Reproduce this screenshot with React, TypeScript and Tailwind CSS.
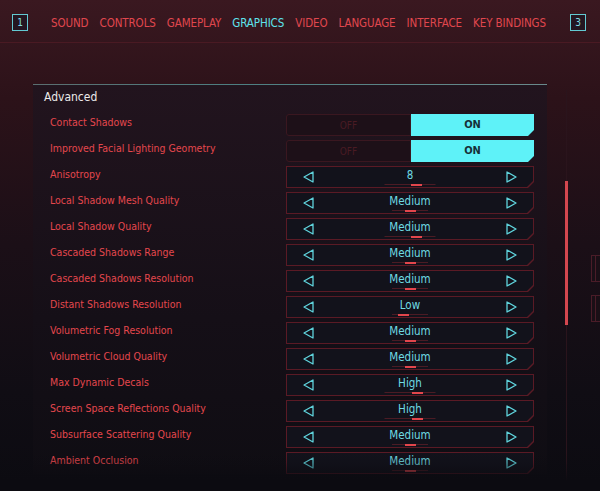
import React from 'react';

// Types
type Row =
  | { label: string; kind: 'toggle' }
  | { label: string; kind: 'select'; value: string; track: number; seg: number };

// Constants
const TABS = ['SOUND', 'CONTROLS', 'GAMEPLAY', 'GRAPHICS', 'VIDEO', 'LANGUAGE', 'INTERFACE', 'KEY BINDINGS'];
const ACTIVE_TAB = 'GRAPHICS';

const ROWS: Row[] = [
  { label: 'Contact Shadows', kind: 'toggle' },
  { label: 'Improved Facial Lighting Geometry', kind: 'toggle' },
  { label: 'Anisotropy', kind: 'select', value: '8', track: 51, seg: 6 },
  { label: 'Local Shadow Mesh Quality', kind: 'select', value: 'Medium', track: 36, seg: 0 },
  { label: 'Local Shadow Quality', kind: 'select', value: 'Medium', track: 51, seg: 6 },
  { label: 'Cascaded Shadows Range', kind: 'select', value: 'Medium', track: 36, seg: 0 },
  { label: 'Cascaded Shadows Resolution', kind: 'select', value: 'Medium', track: 36, seg: 0 },
  { label: 'Distant Shadows Resolution', kind: 'select', value: 'Low', track: 36, seg: -7 },
  { label: 'Volumetric Fog Resolution', kind: 'select', value: 'Medium', track: 36, seg: 0 },
  { label: 'Volumetric Cloud Quality', kind: 'select', value: 'Medium', track: 36, seg: 0 },
  { label: 'Max Dynamic Decals', kind: 'select', value: 'High', track: 51, seg: 7 },
  { label: 'Screen Space Reflections Quality', kind: 'select', value: 'High', track: 51, seg: 7 },
  { label: 'Subsurface Scattering Quality', kind: 'select', value: 'Medium', track: 36, seg: 0 },
  { label: 'Ambient Occlusion', kind: 'select', value: 'Medium', track: 36, seg: 0 },
];

const FONT = "font-['DejaVu_Sans_Condensed','DejaVu_Sans',sans-serif]";
const CUT = '[clip-path:polygon(0_0,100%_0,100%_calc(100%-6px),calc(100%-6px)_100%,0_100%)]';

const Arrow = ({ dir }: { dir: 'left' | 'right' }) => (
  <svg width="11" height="12" viewBox="0 0 11 12" className="shrink-0">
    <path
      d={dir === 'left' ? 'M10 1 L1 6 L10 11 Z' : 'M1 1 L10 6 L1 11 Z'}
      fill="none"
      stroke="#5fd3dc"
      strokeWidth="1.3"
      strokeLinejoin="round"
    />
  </svg>
);

const KeyHint = ({ n }: { n: string }) => (
  <div className="flex h-[17px] w-[16px] shrink-0 items-center justify-center border border-[#63c9d2] bg-[#241621] text-[10px] leading-none text-[#7fdde5]">
    {n}
  </div>
);

function Selector({ value, track, seg }: { value: string; track: number; seg: number }) {
  return (
    <div className={`h-[22px] w-[248px] bg-[#5a1a25] p-px ${CUT}`}>
      <div className={`relative flex h-full items-center justify-between bg-[#12121b] px-[16px] ${CUT}`}>
        <Arrow dir="left" />
        <span className="pb-[3px] text-[11.5px] leading-none text-[#6fdbe3]">{value}</span>
        <Arrow dir="right" />
        {/* value indicator */}
        <div
          className="absolute bottom-[2px] left-1/2 h-px -translate-x-1/2 bg-[#4b1b24]"
          style={{ width: track }}
        />
        <div
          className="absolute bottom-[1px] left-1/2 h-[2px] w-[11px] bg-[#e2464c]"
          style={{ marginLeft: seg - 5 }}
        />
      </div>
    </div>
  );
}

function Toggle() {
  return (
    <div className="flex h-[22px] w-[248px]">
      <div className="flex h-full w-[125px] items-center justify-center rounded-l-[3px] border border-[#3a1720] bg-[#1d1018] text-[10px] text-[#4a1b24]">
        OFF
      </div>
      <div className={`flex h-full flex-1 items-center justify-center bg-[#5ef2f8] text-[11px] font-semibold text-[#163038] ${CUT}`}>
        ON
      </div>
    </div>
  );
}

export default function App() {
  return (
    <div
      className={`relative h-[491px] w-[600px] overflow-hidden bg-[linear-gradient(180deg,#3a1820_0%,#2c1219_20%,#1b0f17_50%,#100d14_80%,#0c0b11_100%)] ${FONT}`}
    >
      {/* Header tabs */}
      <div className="flex h-[43px] items-center border-b border-[#4a1a23] pl-[12px] pr-[14px] pt-[3px]">
        <KeyHint n="1" />
        <div className="ml-[23px] flex flex-1 items-center gap-[11px] whitespace-nowrap pt-[3px] text-[11.5px] tracking-[-0.1px]">
          {TABS.map(tab => (
            <span key={tab} className={tab === ACTIVE_TAB ? 'text-[#5ee3ec]' : 'text-[#e0474e]'}>
              {tab}
            </span>
          ))}
        </div>
        <KeyHint n="3" />
      </div>

      {/* Advanced panel */}
      <div className="ml-[33px] mt-[41px] w-[514px] bg-[linear-gradient(180deg,#22141e_0%,#150f17_60%,#0f0d13_100%)]">
        <div className="h-px bg-[linear-gradient(90deg,#5b6e70_0%,#4d7f82_40%,#6a8a8c_100%)]" />
        <div className="pl-[11px] pt-[4px] text-[12px] leading-[16px] text-[#eceaea]">Advanced</div>
        <div className="mt-[9px] flex flex-col gap-[4px]">
          {ROWS.map(row => (
            <div key={row.label} className="flex items-start">
              <div className="w-[253px] pl-[17px] text-[10.5px] leading-[16px] text-[#e4474d]">
                {row.label}
              </div>
              {row.kind === 'toggle' ? (
                <Toggle />
              ) : (
                <Selector value={row.value} track={row.track} seg={row.seg} />
              )}
            </div>
          ))}
        </div>
      </div>

      {/* Scroll track and thumb */}
      <div className="absolute left-[566px] top-[90px] h-[401px] w-px bg-[#2a141c]" />
      <div className="absolute left-[565px] top-[181px] h-[144px] w-[3px] bg-[#d3474f]" />

      {/* Right edge side tabs */}
      <div className="absolute left-[591px] top-[255px] h-[27px] w-[12px] border border-[#4a1c28] bg-[#1a0f16]">
        <div className="ml-[3px] h-full w-px bg-[#4a1c28]" />
      </div>
      <div className="absolute left-[591px] top-[295px] h-[27px] w-[12px] border border-[#4a1c28] bg-[#1a0f16]">
        <div className="ml-[3px] h-full w-px bg-[#4a1c28]" />
      </div>

      {/* Bottom fade */}
      <div className="pointer-events-none absolute bottom-0 left-0 h-[38px] w-full bg-[linear-gradient(180deg,rgba(12,11,17,0)_0%,rgba(12,11,17,0.2)_25%,rgba(12,11,17,1)_75%)]" />
    </div>
  );
}
